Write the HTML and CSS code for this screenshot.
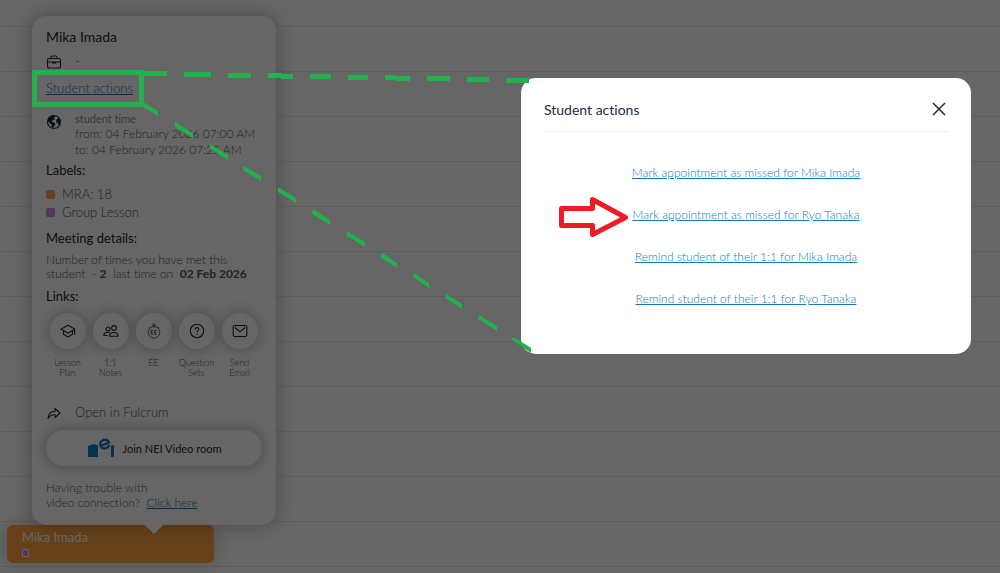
FILE: index.html
```
<!DOCTYPE html>
<html lang="en">
<head>
  <meta charset="utf-8">
  <title>Student actions</title>
  <link rel="stylesheet" href="styles.css">
</head>
<body>
  <div class="calendar">
    <div class="event">
      <div class="event-title">Mika Imada</div>
      <span class="event-tag"></span>
    </div>

    <div class="card">
      <div class="student-name">Mika Imada</div>
      <div class="icon-row company">
        <svg class="icon" viewBox="0 0 16 16"><rect x="1.5" y="4.5" width="13" height="9.5" rx="2"/><path d="M5 4.5V3.2Q5 2 6.2 2h3.6Q11 2 11 3.2v1.3M1.5 8h13M6.5 8v1h3V8"/></svg>
        <span>-</span>
      </div>
      <a class="actions-link" href="#">Student actions</a>
      <div class="icon-row time">
        <svg class="icon globe" viewBox="0 0 16 16"><circle cx="8" cy="8" r="6.5"/><path class="land" d="M3 3 6.500 1 9.500 2 8 4 9 5.500 7 6 5.500 7.500 8 8.500 9.500 10 8.500 12 7 14.500 5.500 12.500V10.500L3 8.500 1.500 6ZM10.500 5.500l2.500-1.800 1.800 3.300-.5 3.500-1.800.5-.8-2-1.700-1Z"/></svg>
        <div>
          <div class="time-label">student time</div>
          <div>from: 04 February 2026 07:00 AM</div>
          <div>to: 04 February 2026 07:25 AM</div>
        </div>
      </div>

      <div class="section-title labels-title">Labels:</div>
      <ul class="labels">
        <li><span class="dot orange"></span>MRA: 18</li>
        <li><span class="dot purple"></span>Group Lesson</li>
      </ul>

      <div class="section-title meeting-title">Meeting details:</div>
      <p class="meeting">Number of times you have met this<br>student &nbsp;- <b>2</b> &nbsp;last time on &nbsp;<b>02 Feb 2026</b></p>

      <div class="section-title links-title">Links:</div>
      <div class="links">
        <button class="link-item">
          <span class="circle"><svg class="icon" viewBox="0 0 16 16"><path d="M1 6.2 8 2.3l7 3.9-7 3.9ZM3.5 7.7v3.6L8 14l4.5-2.7V7.7M14.6 6.5v5.2"/></svg></span>
          Lesson<br>Plan
        </button>
        <button class="link-item">
          <span class="circle"><svg class="icon" viewBox="0 0 16 16"><circle cx="5" cy="6" r="2"/><circle cx="11" cy="5" r="2.4"/><path d="M6.5 13.2h8.7q0-3.7-4.3-3.7t-4.4 3.7ZM6.8 9.8Q1 8.5.8 12.5h3.7"/></svg></span>
          1:1<br>Notes
        </button>
        <button class="link-item">
          <span class="circle"><svg class="icon thin" viewBox="0 0 16 16"><circle cx="8" cy="9.3" r="5.8"/><circle cx="8" cy="2" r="1.2"/><path d="M8 3.2v1.2M3 4l1 1M13 4l-1 1M7.3 7.3H5.2v4h2.1M5.2 9.3h2M10.8 7.3H8.7v4h2.1M8.7 9.3h2"/></svg></span>
          EE
        </button>
        <button class="link-item">
          <span class="circle"><svg class="icon" viewBox="0 0 16 16"><circle cx="8" cy="8" r="6.7"/><path d="M6.2 6.4q0-1.8 1.8-1.8t1.8 1.7Q9.800 7.300 8.800 7.900 8 8.400 8 9.300M8 10.500v1.200"/></svg></span>
          Question<br>Sets
        </button>
        <button class="link-item">
          <span class="circle"><svg class="icon" viewBox="0 0 16 16"><rect x="1.200" y="2.500" width="13.600" height="11" rx="1.500"/><path d="m3 4.500 5 4.300 5-4.300"/></svg></span>
          Send<br>Email
        </button>
      </div>

      <div class="icon-row fulcrum">
        <svg class="icon" viewBox="0 0 16 16"><path d="M9 3.500 14 8l-5 4.500V9.800Q4.500 9.500 2 13.500 2.500 6.500 9 6.200Z"/></svg>
        <span>Open in Fulcrum</span>
      </div>
      <button class="join">
        <svg class="nei" viewBox="0 0 28 20"><path class="fill" d="M1 8.500q0-1 1-1h1.500l1-1H9q2 0 2 2V19H2q-1 0-1-1ZM24 8l1-.8h2V18q0 1-1 1h-2Z"/><path class="e" d="M13.500 8 22 4.500Q20.500.800 16.500 2q-4.300 1.700-3 5.500 1.500 4 5.500 2.700 2.500-.9 3.300-3.200"/></svg>
        Join NEI Video room
      </button>
      <p class="trouble">Having trouble with<br>video connection? &nbsp;<a href="#">Click here</a></p>
    </div>
  </div>

  <div class="overlay"></div>

  <div class="modal" role="dialog" aria-labelledby="modalTitle">
    <div class="modal-header">
      <span id="modalTitle">Student actions</span>
      <button class="close" aria-label="Close">
        <svg viewBox="0 0 14 14"><path d="m1 1 12 12M13 1 1 13"/></svg>
      </button>
    </div>
    <div class="modal-links">
      <a href="#">Mark appointment as missed for Mika Imada</a>
      <a href="#">Mark appointment as missed for Ryo Tanaka</a>
      <a href="#">Remind student of their 1:1 for Mika Imada</a>
      <a href="#">Remind student of their 1:1 for Ryo Tanaka</a>
    </div>
  </div>

  <!-- callout marks -->
  <svg class="marks" width="1000" height="573" viewBox="0 0 1000 573">
    <g class="green">
      <rect x="34.500" y="72.500" width="107" height="32"/>
      <path d="M144 73.500h23M184 74.500h27M228 75.500h23M268 75.500h14M281 76.500h12M310 76.500h21M348 77.500h20M385 77.500h10M395 78.500h15M427 78.500h23M467 79.500h22M506 80.500h23"/>
    </g>
    <path class="dashes" d="M143 102l15 9v5l-15-9ZM175 122l18 11v5l-18-11ZM210 144l18 11v5l-18-11ZM244 166l17 10v5l-18-11ZM278 187l18 11v5l-18-11ZM313 209l17 11v5l-18-11ZM347 231l18 11v5l-18-11ZM382 253l15 10v5l-17-11ZM414 273l15 10v5l-16-11ZM446 294l16 10v5l-17-11ZM479 315l18 11v5l-19-12ZM514 337l17 11v5l-20-14Z"/>
    <path class="arrow" d="M561.500 208.500h31v-9l33 18-33 17v-9h-31Z"/>
  </svg>
</body>
</html>
```
FILE: styles.css
```
* {
  box-sizing: border-box;
}
body {
  font-family: Lato, sans-serif;
  font-weight: 300;
  font-size: 13px;
  font-variant-ligatures: none;
  margin: 0;
  height: 100vh;
  overflow: hidden;
  color: #525c60;
}
button {
  font: inherit;
  color: inherit;
  border: 0;
  padding: 0;
  cursor: pointer;
}
p,
ul {
  margin: 0;
  padding: 0;
}
a {
  color: #1779ba;
}
.calendar {
  position: relative;
  height: 100%;
  background: repeating-linear-gradient(#fff 0, #fff 44px, #e9e9e9 44px, #e9e9e9 45px);
  background-position: 0 -18px;
  background-size: 100% 900px;
}
.event {
  position: absolute;
  left: 7px;
  top: 525px;
  width: 207px;
  height: 38px;
  padding: 4px 15px;
  border-radius: 6px;
  background: #ffa343;
  color: #fff;
  font-weight: 400;
  line-height: 17px;
  box-shadow: 0 0 20px rgba(0, 0, 0, 0.2);
}
.event-tag {
  display: block;
  width: 7px;
  height: 8px;
  margin-top: 3px;
  border: 1px solid #fff;
  border-radius: 1px;
  background: #c98be3;
}
.card {
  position: absolute;
  left: 32px;
  top: 16px;
  width: 244px;
  padding: 11px 14px 15px;
  border-radius: 15px;
  background: #fff;
  box-shadow: 0 0 20px rgba(0, 0, 0, 0.3);
}
.card::after {
  content: "";
  position: absolute;
  left: 113px;
  top: 100%;
  border: 9px solid transparent;
  border-top-color: #fff;
  border-bottom: 0;
}
.student-name {
  font-size: 14px;
  font-weight: 400;
  line-height: 20px;
  color: #1c2b3d;
}
.icon {
  flex: none;
  width: 16px;
  height: 16px;
  fill: none;
  stroke: #1c2b3d;
  stroke-width: 1.1;
  stroke-linejoin: round;
}
.icon.thin {
  stroke-width: 0.7;
}
.icon-row {
  display: flex;
  gap: 13px;
  line-height: 20px;
}
.icon-row .icon {
  margin-top: 3px;
}
.company {
  margin-top: 4px;
}
.actions-link {
  display: block;
  margin-top: 7px;
  line-height: 20px;
}
.icon-row.time {
  margin-top: 14px;
  font-size: 12px;
  line-height: 16px;
  white-space: nowrap;
}
.time-label {
  font-size: 11px;
  font-weight: 400;
  line-height: 14px;
  color: #8a8f94;
}
.icon.globe {
  margin-top: 2px;
}
.globe .land {
  fill: #1c2b3d;
  stroke: none;
}
.section-title {
  font-weight: 400;
  line-height: 20px;
  color: #1c2b3d;
}
.labels-title {
  margin-top: 2px;
}
.labels {
  margin-top: 5px;
  list-style: none;
  line-height: 18px;
}
.labels li {
  display: flex;
  align-items: center;
  gap: 7px;
}
.dot {
  width: 9px;
  height: 9px;
  border-radius: 2px;
}
.orange {
  background: #ffa343;
}
.purple {
  background: #c98be3;
}
.meeting-title {
  margin-top: 7px;
}
.meeting {
  margin-top: 5px;
  font-size: 12px;
  line-height: 14px;
  white-space: nowrap;
}
.meeting b {
  font-weight: 700;
}
.links-title {
  margin-top: 5px;
}
.links {
  display: flex;
  margin-top: 7px;
}
.link-item {
  width: 43px;
  background: none;
  font-size: 9px;
  line-height: 10px;
  align-self: flex-start;
}
.circle {
  display: flex;
  align-items: center;
  justify-content: center;
  width: 36px;
  height: 36px;
  margin: 0 auto 9px;
  border-radius: 50%;
  background: #fff;
  box-shadow: 0 0 15px rgba(0, 0, 0, 0.3);
}
.fulcrum {
  margin-top: 24px;
}
.join {
  display: flex;
  align-items: center;
  justify-content: center;
  gap: 8px;
  width: 100%;
  height: 36px;
  margin-top: 8px;
  border-radius: 18px;
  background: #fff;
  font-size: 11px;
  font-weight: 400;
  color: #1c2b3d;
  box-shadow: 0 0 15px rgba(0, 0, 0, 0.3);
}
.nei {
  width: 28px;
  height: 20px;
}
.nei .fill {
  fill: #1779ba;
}
.nei .e {
  fill: none;
  stroke: #1779ba;
  stroke-width: 2.4;
}
.trouble {
  margin-top: 14px;
  font-size: 12px;
  line-height: 15px;
}
.overlay {
  position: fixed;
  inset: 0;
  background: rgba(0, 0, 0, 0.6);
}
.modal {
  position: fixed;
  top: 78px;
  right: 29px;
  width: 45%;
  padding: 11px 23px 45px;
  border-radius: 15px;
  background: #fff;
}
.modal-header {
  display: flex;
  align-items: center;
  justify-content: space-between;
  height: 43px;
  padding-bottom: 2px;
  border-bottom: 1px solid #eee;
  font-size: 14px;
  font-weight: 400;
  color: #1c2b3d;
}
.close {
  display: flex;
  padding: 2px;
  background: none;
}
.close svg {
  width: 14px;
  height: 14px;
  stroke: #1c2b3d;
  stroke-width: 1.5;
}
.modal-links {
  display: flex;
  flex-direction: column;
  align-items: center;
  gap: 22px;
  margin-top: 31px;
  font-size: 12px;
  line-height: 20px;
}
.marks {
  position: absolute;
  left: 0;
  top: 0;
}
.green {
  fill: none;
  stroke: #22b14c;
  stroke-width: 5;
}
.dashes {
  fill: #22b14c;
}
.arrow {
  fill: none;
  stroke: #ed1c24;
  stroke-width: 5;
  stroke-linejoin: round;
}
```
